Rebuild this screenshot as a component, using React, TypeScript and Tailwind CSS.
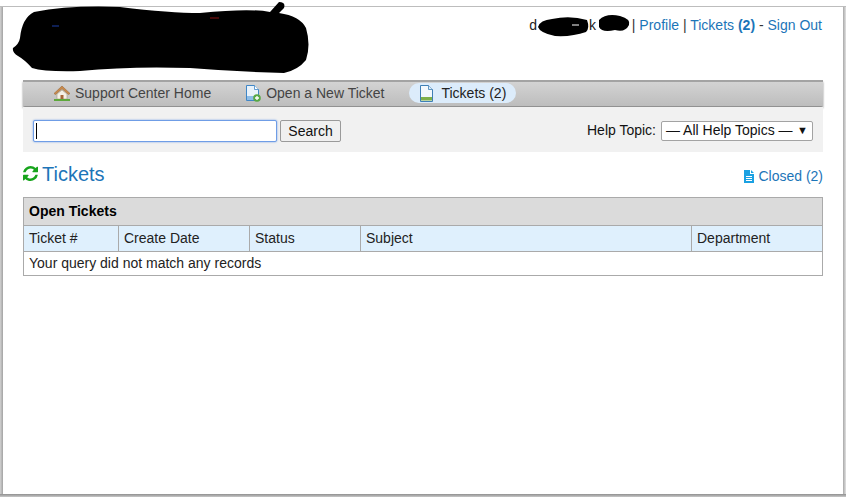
import React from "react";

const font = { fontFamily: '"Liberation Sans", Arial, sans-serif' };

function HomeIcon() {
  return (
    <svg width="18" height="16" viewBox="0 0 18 16">
      <path d="M1 8.500 9 1l8 7.500-1.500 1L9 3.800 2.500 9.500z" fill="#c98a4b" stroke="#9a6a3a" strokeWidth="0.6" />
      <path d="M4 9 9 5l5 4v5H4z" fill="#f4f0e6" stroke="#a89a80" strokeWidth="0.6" />
      <rect x="7.500" y="10" width="3" height="4" fill="#a5683a" />
      <rect x="1" y="14" width="16" height="2" fill="#5da83c" />
    </svg>
  );
}

function NewTicketIcon() {
  return (
    <svg width="16" height="17" viewBox="0 0 16 17">
      <path d="M1.500.5h8l4 4v11h-12z" fill="#e8f2fb" stroke="#3f86c6" strokeWidth="1" />
      <path d="M9.500.5v4h4" fill="#fff" stroke="#3f86c6" strokeWidth="0.8" />
      <rect x="2" y="11" width="8" height="4" fill="#8dbde8" />
      <circle cx="12" cy="13" r="3.800" fill="#57a845" />
      <path d="M12 11v4M10 13h4" stroke="#fff" strokeWidth="1.300" />
    </svg>
  );
}

function TicketsIcon() {
  return (
    <svg width="15" height="17" viewBox="0 0 15 17">
      <path d="M1.500.5h8l4 4v12h-12z" fill="#f2f8fd" stroke="#3f7fb5" strokeWidth="1" />
      <path d="M9.500.5v4h4" fill="#dcebf7" stroke="#3f7fb5" strokeWidth="0.8" />
      <rect x="2" y="12" width="11" height="3.500" fill="#7fb04a" />
    </svg>
  );
}

function RefreshIcon() {
  return (
    <svg width="15" height="15" viewBox="0 0 1536 1536" fill="#17a41c">
      <path d="M1511 928q0 5-1 7-64 268-268 434.500T764 1536q-146 0-282.500-55T238 1324l-129 129q-19 19-45 19t-45-19-19-45V960q0-26 19-45t45-19h448q26 0 45 19t19 45-19 45l-137 137q71 66 161 102t187 36q134 0 250-65t186-179q11-17 53-117 8-23 30-23h192q13 0 22.500 9.500t9.500 22.500zm25-800v448q0 26-19 45t-45 19h-448q-26 0-45-19t-19-45 19-45l138-138Q969 256 768 256q-134 0-250 65T332 500q-11 17-53 117-8 23-30 23H50q-13 0-22.500-9.500T18 608v-7q65-268 270-434.500T768 0q146 0 284 55.500T1297 212l130-129q19-19 45-19t45 19 19 45z" />
    </svg>
  );
}

function FileIcon() {
  return (
    <svg width="10" height="13" viewBox="0 0 10 13" fill="#1ba1e2">
      <path d="M0 0h6v4h4v9H0zM7 0l3 3H7z" />
      <path d="M2 6h6v1H2zM2 8h6v1H2zM2 10h6v1H2z" fill="#fff" />
    </svg>
  );
}

export default function App() {
  return (
    <div className="relative flex h-[497px] w-[846px] flex-col overflow-hidden bg-white text-[14px] text-black" style={font}>
      <div className="h-[6px] bg-white" />
      <div className="flex h-[488px] border-t border-[#bdbdbd]">
        <div className="w-[3px] bg-gradient-to-r from-[#d2d2d2] to-[#a3a3a3]" />
        <div className="w-[840px] bg-white px-[20px]">
          <div className="flex h-[73px] justify-end pt-[8px] pr-px leading-[20px]">
            <span className="text-[#222]">
              d<span className="inline-block w-[52px]" />k<span className="inline-block w-[32px]" />
            </span>
            <span className="whitespace-pre text-[#1c75b8]">
              <span className="text-[#333]"> | </span>Profile<span className="text-[#333]"> | </span>Tickets <b>(2)</b>
              <span className="text-[#333]"> - </span>Sign Out
            </span>
          </div>

          <nav className="flex h-[26px] items-center border-t-2 border-[#a3a3a3] bg-gradient-to-b from-[#d3d3d3] to-[#bdbdbd] pb-[2px] pl-[30px] shadow-[0_2px_2px_#8a8a8a]">
            <a className="flex items-center gap-[4px] text-[#444]">
              <HomeIcon />
              Support Center Home
            </a>
            <a className="ml-[34px] flex items-center gap-[5px] text-[#444]">
              <NewTicketIcon />
              Open a New Ticket
            </a>
            <a className="ml-[25px] flex h-[20px] items-center gap-[7px] rounded-full bg-[#dcecfb] pl-[10px] pr-[10px] text-[#222]">
              <TicketsIcon />
              Tickets (2)
            </a>
          </nav>

          <div className="mt-px flex h-[45px] items-center justify-between bg-[#f1f1f1] pl-[10px] pr-[10px] pt-[2px]">
            <div className="flex items-center gap-[3px]">
              <div className="flex h-[22px] w-[244px] items-center rounded-[2px] border border-[#6f9de6] bg-white pl-[2px] shadow-[0_0_2px_#6f9de6]">
                <span className="h-[16px] w-px bg-black" />
              </div>
              <button className="h-[22px] w-[61px] rounded-[2px] border border-[#9a9a9a] bg-[#f0f0f0] text-[14px] text-[#111]">
                Search
              </button>
            </div>
            <div className="flex items-center gap-[5px] text-[#111]">
              <span>Help Topic:</span>
              <div className="flex h-[20px] w-[152px] items-center justify-between rounded-[2px] border border-[#a3a3a3] bg-white pl-[4px] pr-[4px] text-[14px]">
                <span className="whitespace-nowrap">— All Help Topics —</span>
                <span className="text-[11px] leading-none">▼</span>
              </div>
            </div>
          </div>

          <div className="flex h-[45px] items-center justify-between">
            <h1 className="flex items-center gap-[4px] pb-[2px] text-[20px] font-normal text-[#1c75b8]">
              <RefreshIcon />
              Tickets
            </h1>
            <a className="mt-[3px] flex items-center gap-[4px] text-[#1c75b8]">
              <FileIcon />
              Closed (2)
            </a>
          </div>

          <table className="w-[799px] table-fixed border-collapse border border-[#aaaaaa]">
            <colgroup>
              <col className="w-[95px]" />
              <col className="w-[131px]" />
              <col className="w-[111px]" />
              <col className="w-[331px]" />
              <col className="w-[131px]" />
            </colgroup>
            <thead>
              <tr className="h-[28px] bg-[#dbdbdb]">
                <th colSpan={5} className="border border-[#aaaaaa] px-[5px] text-left font-bold">
                  Open Tickets
                </th>
              </tr>
              <tr className="h-[26px] bg-[#dff0fd] text-[#222]">
                {["Ticket #", "Create Date", "Status", "Subject", "Department"].map((h) => (
                  <th key={h} className="border border-[#aaaaaa] px-[5px] text-left font-normal">
                    {h}
                  </th>
                ))}
              </tr>
            </thead>
            <tbody>
              <tr className="h-[24px]">
                <td colSpan={5} className="border border-[#aaaaaa] px-[5px] text-[#222]">
                  Your query did not match any records
                </td>
              </tr>
            </tbody>
          </table>
        </div>
        <div className="w-[3px] bg-gradient-to-r from-[#a8a8a8] to-[#e2e2e2]" />
      </div>
      <div className="h-[3px] bg-gradient-to-b from-[#8f8f8f] to-[#c8c8c8]" />

      {/* Hand-drawn redaction marks */}
      <svg className="pointer-events-none absolute left-0 top-0" width="846" height="80" viewBox="0 0 846 80">
        <path
          d="M13 48 Q19 44 20 38 Q22 18 34 12 Q70 5 120 7 Q170 13 200 13 Q250 8 270 12 L279 2 Q286 2 284 8 L279 13 Q300 16 306 28 Q311 45 306 60 Q298 70 284 73 Q240 72 190 68 Q130 66 80 71 Q45 72 32 68 Q25 60 18 56 Q12 52 13 48Z"
          fill="#000"
        />
        <path d="M52 26h7" stroke="#1c3fa8" strokeWidth="1" />
        <path d="M210 18h9" stroke="#8a1010" strokeWidth="1" />
        <path
          d="M538 27 Q540 20 552 19 Q570 15 587 20 Q590 28 586 32 Q572 37 555 36 Q540 33 538 27Z"
          fill="#000"
        />
        <path d="M572 25h7" stroke="#fff" strokeWidth="1" />
        <path
          d="M599 20 Q606 13 620 16 Q631 19 629 25 Q625 33 615 30 Q602 33 599 27Z"
          fill="#000"
        />
      </svg>
    </div>
  );
}
